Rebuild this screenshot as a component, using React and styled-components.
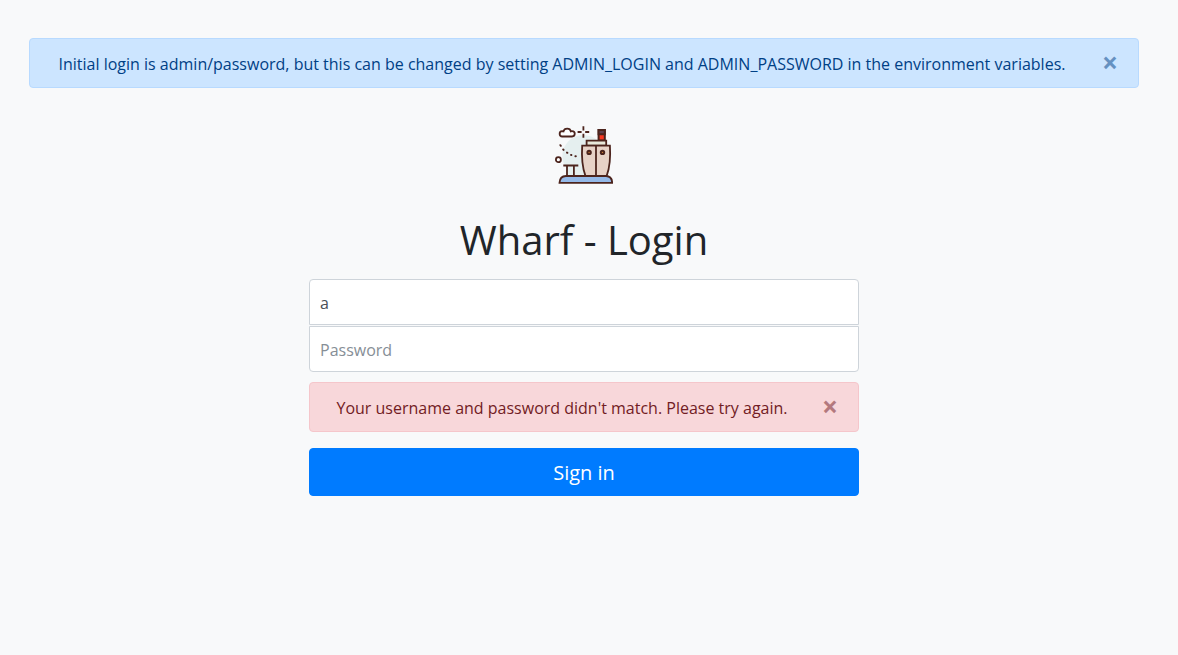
import React, { useState } from "react";
import styled, { createGlobalStyle, css } from "styled-components";

const GlobalStyle = createGlobalStyle`
  *, *::before, *::after { box-sizing: border-box; }
  body {
    margin: 0;
    background: #f8f9fa;
    color: #212529;
    font-family: "Open Sans", "Noto Sans", sans-serif;
    font-size: 16px;
    line-height: 24px;
  }
`;

const Page = styled.main`
  padding: 38px 10px 40px 0;
`;

const Container = styled.div`
  max-width: 1140px;
  margin: 0 auto;
  padding: 0 15px;
`;

const tones = {
  primary: css`
    color: #004085;
    background: #cce5ff;
    border-color: #b8daff;
  `,
  danger: css`
    color: #721c24;
    background: #f8d7da;
    border-color: #f5c6cb;
  `,
};

const AlertBox = styled.div`
  display: flex;
  align-items: flex-start;
  margin-bottom: 16px;
  border: 1px solid;
  border-radius: 4px;
  text-align: center;
  ${({ $tone }) => tones[$tone]}
`;

const AlertText = styled.span`
  flex: 1;
  padding: 13px 0 11px 20px;
`;

const CloseButton = styled.button`
  width: 64px;
  padding: 11px 20px 13px;
  border: 0;
  background: transparent;
  color: inherit;
  font: 700 28px/24px "Open Sans", sans-serif;
  text-align: right;
  opacity: 0.5;
  cursor: pointer;
`;

const Form = styled.form`
  max-width: 580px;
  margin: 0 auto;
  padding: 15px;
  text-align: center;
`;

const Logo = styled.svg`
  display: block;
  width: 58px;
  height: 58px;
  margin: 7px auto 32px;
`;

const Title = styled.h1`
  margin: 0 0 15px;
  font-size: 40px;
  font-weight: 400;
  line-height: 48px;
`;

const Fields = styled.div`
  display: flex;
  flex-direction: column;
  gap: 1px;
  margin-bottom: 10px;
`;

const Input = styled.input`
  width: 100%;
  height: 46px;
  padding: 12px 10px 10px;
  border: 1px solid #ced4da;
  border-radius: ${({ $end }) => ($end === "top" ? "4px 4px 0 0" : "0 0 4px 4px")};
  background: #fff;
  color: #495057;
  font: inherit;
  outline: none;

  &::placeholder {
    color: #868e96;
    opacity: 1;
  }
  &:focus {
    border-color: #80bdff;
  }
`;

const SubmitButton = styled.button`
  display: block;
  width: 100%;
  padding: 9px 16px 7px;
  border: 1px solid #007bff;
  border-radius: 4px;
  background: #007bff;
  color: #fff;
  font: 400 20px/30px "Open Sans", sans-serif;
  cursor: pointer;
`;

function Alert({ tone, children }) {
  const [open, setOpen] = useState(true);
  if (!open) return null;
  return (
    <AlertBox $tone={tone} role="alert">
      <AlertText>{children}</AlertText>
      <CloseButton type="button" aria-label="Close" onClick={() => setOpen(false)}>
        ×
      </CloseButton>
    </AlertBox>
  );
}

function WharfLogo() {
  return (
    <Logo viewBox="0 0 58 58" fill="none" stroke="#4c241d" strokeWidth="2" aria-hidden="true">
      <circle cx="28.3" cy="30" r="21" fill="#e5efef" stroke="none" />
      <path
        d="M7.500 10.500a2.700 2.700 0 0 1-.3-5.400c.5 0 .9.1 1.300.2C8.900 3.600 10.200 2.600 12.200 2.600s3.300 1.100 3.600 2.700c.4-.1.800-.2 1.300-.2a2.700 2.700 0 0 1-.1 5.400z"
        fill="#fff"
        strokeWidth="1.800"
      />
      <path d="M28.400.2v4.200M28.400 7.800v4M22.600 6h4M30.200 6h4" strokeWidth="1.800" />
      <path
        d="M5.400 19.200l.4.600M8.200 23.500l.4.400M12 26.600l.4.200M16 28.900l.4.100M20.400 30.300h.4"
        strokeLinecap="round"
      />
      <circle cx="3.400" cy="33.700" r="2.500" fill="#fff" strokeWidth="1.800" />
      <path d="M12 40h7v10h-7z" fill="#e5efef" stroke="none" />
      <path d="M8.300 39.500h15M12 39.500v10.300M18.900 39.500v10.300" strokeWidth="1.800" />
      <path d="M43.600 3.900h6.200v10.500h-6.200z" fill="#f93822" />
      <path d="M43.600 3.900h6.200v4.300h-6.200z" fill="#5d4350" />
      <path d="M31.600 14.600h19.600v5H31.600z" fill="#e8e8da" strokeWidth="1.800" />
      <path
        d="M27.200 19.600h27.700c.7 10.500.3 20.500-3.200 30.200H30.400c-3.500-9.700-3.900-19.700-3.200-30.200z"
        fill="#e7d2c7"
        strokeWidth="1.800"
      />
      <path d="M41 19.600v30.200" strokeWidth="1.800" />
      <circle cx="34.100" cy="26.400" r="1.700" fill="#c87b32" />
      <circle cx="47.500" cy="26.400" r="1.700" fill="#c87b32" />
      <path
        d="M4.500 56.900c.2-4.600 2.200-6.900 6.500-6.900h40c4.100 0 6 2.300 6.200 6.900z"
        fill="#94b9e8"
        strokeWidth="1.800"
      />
    </Logo>
  );
}

export default function App() {
  const [username, setUsername] = useState("a");
  const [password, setPassword] = useState("");
  return (
    <>
      <GlobalStyle />
      <Page>
        <Container>
          <Alert tone="primary">
            Initial login is admin/password, but this can be changed by setting ADMIN_LOGIN and
            ADMIN_PASSWORD in the environment variables.
          </Alert>
          <Form onSubmit={(event) => event.preventDefault()}>
            <WharfLogo />
            <Title>Wharf - Login</Title>
            <Fields>
              <Input
                $end="top"
                type="text"
                name="username"
                aria-label="Username"
                placeholder="Username"
                value={username}
                onChange={(event) => setUsername(event.target.value)}
              />
              <Input
                $end="bottom"
                type="password"
                name="password"
                aria-label="Password"
                placeholder="Password"
                value={password}
                onChange={(event) => setPassword(event.target.value)}
              />
            </Fields>
            <Alert tone="danger">
              Your username and password didn't match. Please try again.
            </Alert>
            <SubmitButton type="submit">Sign in</SubmitButton>
          </Form>
        </Container>
      </Page>
    </>
  );
}
